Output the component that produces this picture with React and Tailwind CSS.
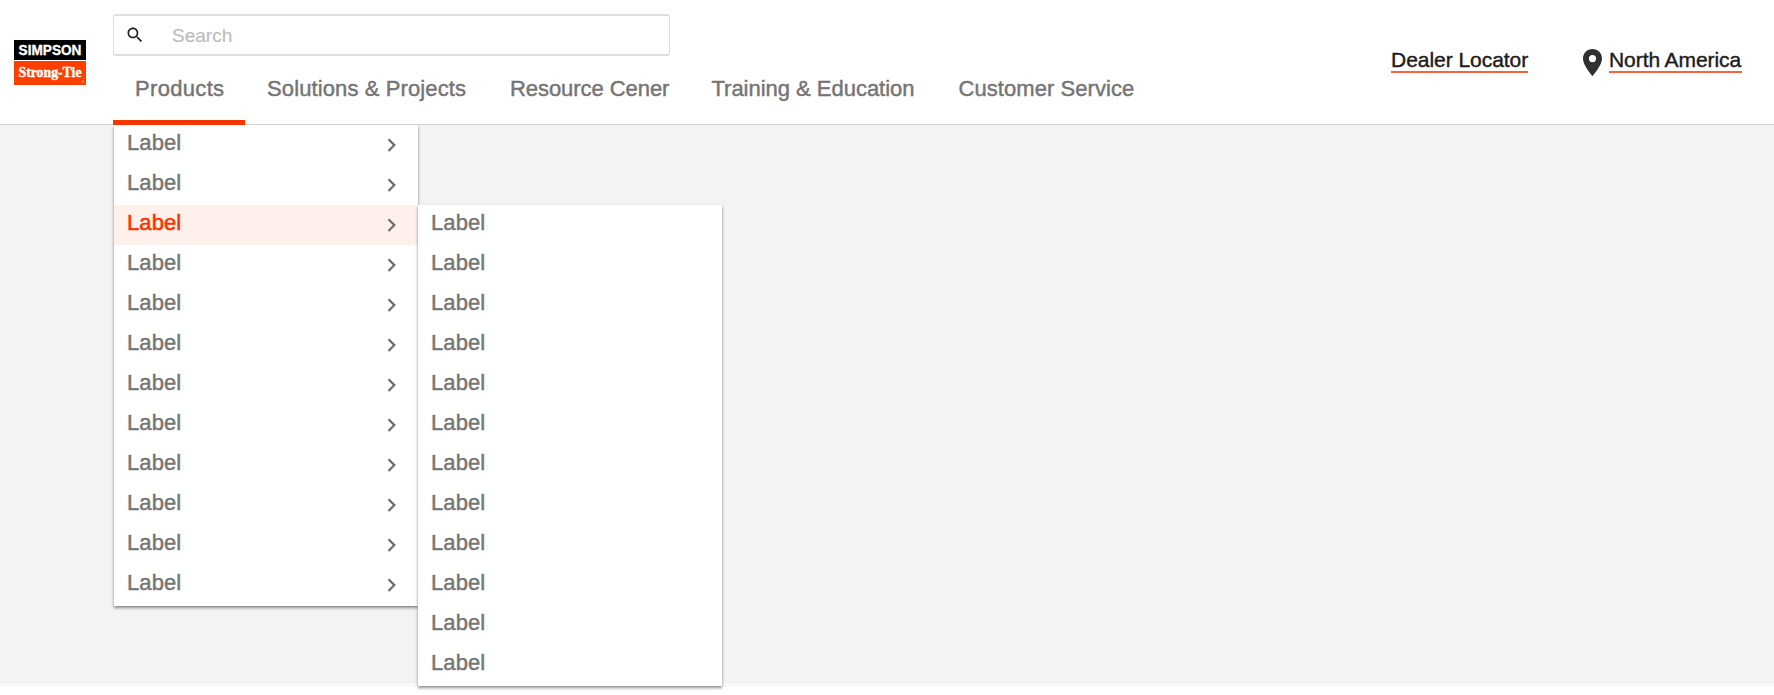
const NAV = [
  { label: "Products", cls: "w-[132px] pl-[22px] tracking-[0.32px]" },
  { label: "Solutions & Projects", cls: "w-[244px] pl-[22px] tracking-[0.11px]" },
  { label: "Resource Cener", cls: "w-[202px] pl-[21px] tracking-[-0.06px]" },
  { label: "Training & Education", cls: "w-[247px] pl-[20.5px] tracking-[-0.02px]" },
  { label: "Customer Service", cls: "w-[220px] pl-[20.5px] tracking-[0.06px]" },
];

function Logo() {
  return (
    <div className="ml-[14px] mt-[40px] flex h-[45px] w-[72px] shrink-0 flex-col text-white">
      <div className="h-[20px] bg-black">
        <svg className="block overflow-visible" width="72" height="20" viewBox="0 0 72 20">
          <text x="4.6" y="14.8" fill="#fff" stroke="#fff" strokeWidth="0.35" fontFamily="Liberation Sans, sans-serif" fontWeight="700" fontSize="14.6" textLength="62.8" lengthAdjust="spacingAndGlyphs">SIMPSON</text>
        </svg>
      </div>
      <div className="mt-px h-[24px] bg-[#ff3f00]">
        <svg className="block overflow-visible" width="72" height="24" viewBox="0 0 72 24">
          <text x="4.5" y="16.2" fill="#fff" stroke="#fff" strokeWidth="0.4" fontFamily="Liberation Serif, serif" fontWeight="700" fontSize="15.4" textLength="63" lengthAdjust="spacingAndGlyphs">Strong-Tie</text>
          <circle cx="68.7" cy="20.6" r="0.9" fill="none" stroke="#ffb499" strokeWidth="0.6" />
        </svg>
      </div>
    </div>
  );
}

function Search() {
  return (
    <div className="mt-[14px] flex h-[43px] w-[557px] items-center rounded-[3px] border border-y-2 border-[#dedede] bg-white">
      <svg className="ml-[11px] shrink-0" width="20" height="20" viewBox="0 0 24 24" fill="#222">
        <path d="M15.5 14h-.79l-.28-.27C15.41 12.59 16 11.11 16 9.5 16 5.91 13.09 3 9.5 3S3 5.91 3 9.5 5.91 16 9.5 16c1.61 0 3.09-.59 4.23-1.57l.27.28v.79l5 4.99L20.49 19l-4.99-5zm-6 0C7.01 14 5 11.99 5 9.5S7.01 5 9.5 5 14 7.01 14 9.5 11.99 14 9.5 14z" />
      </svg>
      <span className="ml-[27px] mt-px text-[19px] leading-[24px] text-[#bdbdbd] [-webkit-text-stroke:0.2px_#bdbdbd]">Search</span>
    </div>
  );
}

function Row({ active, arrow }) {
  return (
    <div
      className={
        "flex h-10 items-start justify-between pl-[13px] pr-[21px] " +
        (active ? "bg-[#fff0eb] text-[#f83500] [-webkit-text-stroke:0.55px_#f83500]" : "text-[#757575] [-webkit-text-stroke:0.45px_#757575]")
      }
    >
      <span className="pt-[5px] text-[22px] leading-[26px] tracking-[0.1px]">Label</span>
      {arrow && (
        <svg className="mt-[13px]" width="10" height="14" viewBox="0 0 10 14" fill="none" stroke="#6e6e6e" strokeWidth="2.2">
          <path d="M1.5 1.2 L7.4 7.1 L1.5 13" />
        </svg>
      )}
    </div>
  );
}

function Menu({ count, activeIndex, arrow, className }) {
  return (
    <div className={"w-[304px] bg-white pb-px shadow-[0_2px_3px_rgba(0,0,0,0.4),0_1px_2px_rgba(0,0,0,0.1)] " + className}>
      {Array.from({ length: count }, (_, i) => (
        <Row key={i} active={i === activeIndex} arrow={arrow} />
      ))}
    </div>
  );
}

export default function App() {
  return (
    <div className="flex h-[695px] w-[1774px] flex-col overflow-hidden bg-white font-['Liberation_Sans',Arial,sans-serif]">
      <header className="relative z-10 flex h-[125px] shrink-0 border-b border-[#cfcfcf] bg-white">
        <Logo />
        <div className="ml-[27px] flex flex-col">
          <Search />
          <nav className="flex h-[68px] text-[22px] text-[#757575] [-webkit-text-stroke:0.45px_#757575]">
            {NAV.map((n, i) => (
              <div
                key={n.label}
                className={"shrink-0 whitespace-nowrap pt-[20px] leading-[26px] " + (i === 0 ? "-mb-px h-[69px] border-b-[5px] border-[#f83500] " : "h-[68px] ") + n.cls}
              >
                {n.label}
              </div>
            ))}
          </nav>
        </div>
        <div className="ml-auto flex items-start pr-[32px] text-[21px] leading-[24px] text-[#1c1c1c] [-webkit-text-stroke:0.4px_#1c1c1c]">
          <a className="mt-[48px] h-[25px] w-[137px] whitespace-nowrap border-b-2 border-[#f9623a] tracking-[-0.04px]">Dealer Locator</a>
          <svg className="ml-[55px] mt-[49px]" width="19" height="27" viewBox="0 0 19 27" fill="#303030">
            <path fillRule="evenodd" d="M9.5 0C4.2 0 0 4.1 0 9.4C0 16.3 9.5 27 9.5 27C9.5 27 19 16.3 19 9.4C19 4.1 14.8 0 9.5 0ZM9.5 13.2A3.6 3.6 0 1 1 9.5 6A3.6 3.6 0 1 1 9.5 13.2Z" />
          </svg>
          <a className="ml-[7px] mt-[48px] h-[25px] w-[133px] whitespace-nowrap border-b-2 border-[#f9623a] tracking-[-0.07px]">North America</a>
        </div>
      </header>
      <main className="h-[559px] shrink-0 bg-[#f3f3f3] pl-[114px]">
        <div className="flex items-start">
          <Menu count={12} activeIndex={2} arrow className="" />
          <Menu count={12} activeIndex={-1} className="relative z-10 mt-[80px]" />
        </div>
      </main>
      <div className="mt-px h-px shrink-0 bg-[#f3f3f3]" />
    </div>
  );
}
